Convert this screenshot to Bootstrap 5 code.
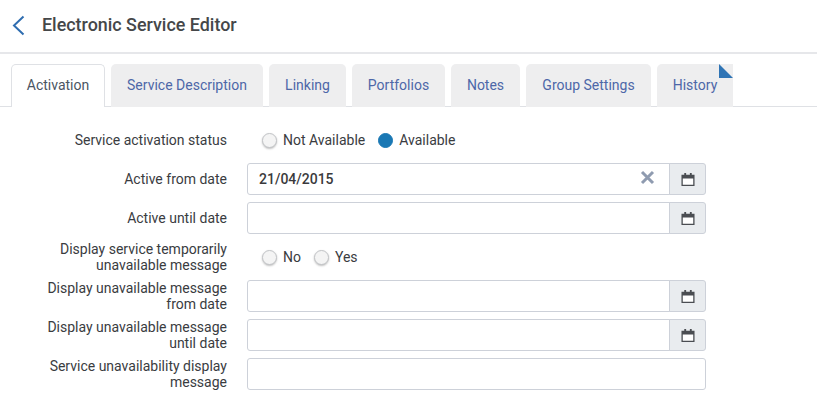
<!DOCTYPE html>
<html lang="en">
<head>
<meta charset="utf-8">
<title>Electronic Service Editor</title>
<link rel="stylesheet" href="https://cdn.jsdelivr.net/npm/bootstrap@5.3.0/dist/css/bootstrap.min.css">
<style>
html, body { height: 413px; overflow: hidden; }
body { font-family: Roboto, "Liberation Sans", sans-serif; font-size: 14px; color: #3a3a3c; background: #fff; }
.page-head { height: 54px; border-bottom: 2px solid #e6e7ea; padding-left: 12px; padding-bottom: 2px; }
.back-btn { width: 30px; line-height: 0; }
.page-title { font-size: 17.9px; font-weight: 500; color: #454749; margin: 0; }
.tab-bar { margin-top: 10px; height: 43px; padding-left: 11px; gap: 6px; border-bottom: 1px solid #dfe1e5; flex-wrap: nowrap; }
.tab-bar .nav-link { height: 43px; padding: 0; display: flex; align-items: center; justify-content: center; font-size: 14px; color: #4d67a8; background: #eeeeef; border: 0; border-radius: 5px 5px 0 0; }
.tab-bar .nav-link.active { color: #4b5563; background: #fff; border: 1px solid #dfe1e5; border-bottom: 0; padding-bottom: 1px; }
.tab-history { position: relative; border-top-right-radius: 0 !important; }
.corner-flag { position: absolute; top: 0; right: 0; width: 14px; height: 14px; background: #2f74b5; clip-path: polygon(0 0, 100% 100%, 0 100%); }
.form-area { padding-top: 17px; }
.form-line { height: 32px; margin-bottom: 7px; display: flex; align-items: center; }
.field-label { width: 227px; flex: none; padding-left: 30px; text-align: right; line-height: 16px; color: #3a3c3f; margin: 0; }
.field-box { width: 459px; margin-left: 20px; flex: none; }
.field-box .form-control { height: 32px; padding: 0 11px 1px; font-size: 14px; font-weight: 500; color: #3a3a3c; border: 1px solid #cdd1d9; border-radius: 3px; box-shadow: none; }
.cal-btn { width: 37px; padding: 0; display: flex; align-items: center; justify-content: center; background: #e9ecef; border: 1px solid #cdd1d9; border-radius: 0 3px 3px 0; }
.clear-mark { position: absolute; top: 7px; right: 51px; z-index: 5; line-height: 0; }
.radio-set { margin-left: 35px; display: flex; align-items: center; }
.radio-opt { display: flex; align-items: center; margin: 0 13px 0 0; gap: 6px; color: #3a3c3f; }
.radio-dot { width: 15px; height: 15px; margin: 0; flex: none; appearance: none; -webkit-appearance: none; border-radius: 50%; background: #f4f4f4; border: 1px solid #c2c4c7; box-shadow: 0 1px 2px rgba(0,0,0,.25); }
.radio-dot:checked { background: #1a78b4; border-color: #1a78b4; box-shadow: none; }
</style>
</head>
<body>
<header class="page-head d-flex align-items-center">
  <a class="back-btn" href="#" aria-label="Back">
    <svg width="13" height="21" viewBox="0 0 13 21"><path d="M11.5 1.5 2 10.5 11.5 19.5" fill="none" stroke="#2f6db0" stroke-width="2"/></svg>
  </a>
  <h1 class="page-title">Electronic Service Editor</h1>
</header>

<ul class="nav tab-bar">
  <li class="nav-item" style="width:94px"><a class="nav-link active" href="#">Activation</a></li>
  <li class="nav-item" style="width:152px"><a class="nav-link" href="#">Service Description</a></li>
  <li class="nav-item" style="width:77px"><a class="nav-link" href="#">Linking</a></li>
  <li class="nav-item" style="width:93px"><a class="nav-link" href="#">Portfolios</a></li>
  <li class="nav-item" style="width:69px"><a class="nav-link" href="#">Notes</a></li>
  <li class="nav-item" style="width:125px"><a class="nav-link" href="#">Group Settings</a></li>
  <li class="nav-item" style="width:76px"><a class="nav-link tab-history" href="#">History<span class="corner-flag"></span></a></li>
</ul>

<form class="form-area">
  <div class="form-line">
    <label class="field-label">Service activation status</label>
    <div class="radio-set">
      <label class="radio-opt"><input class="radio-dot" type="radio" name="act">Not Available</label>
      <label class="radio-opt"><input class="radio-dot" type="radio" name="act" checked>Available</label>
    </div>
  </div>
  <div class="form-line">
    <label class="field-label">Active from date</label>
    <div class="input-group field-box position-relative">
      <input class="form-control" type="text" value="21/04/2015">
      <span class="clear-mark"><svg width="15" height="15" viewBox="0 0 15 15"><path d="M2 2 13 13M13 2 2 13" stroke="#8f9bb0" stroke-width="3"/></svg></span>
      <button class="cal-btn" type="button" aria-label="Calendar"><svg width="14" height="15" viewBox="0 0 15 15"><use href="#cal"/></svg></button>
    </div>
  </div>
  <div class="form-line">
    <label class="field-label">Active until date</label>
    <div class="input-group field-box">
      <input class="form-control" type="text">
      <button class="cal-btn" type="button" aria-label="Calendar"><svg width="14" height="15" viewBox="0 0 15 15"><use href="#cal"/></svg></button>
    </div>
  </div>
  <div class="form-line">
    <label class="field-label">Display service temporarily unavailable message</label>
    <div class="radio-set">
      <label class="radio-opt"><input class="radio-dot" type="radio" name="msg">No</label>
      <label class="radio-opt"><input class="radio-dot" type="radio" name="msg">Yes</label>
    </div>
  </div>
  <div class="form-line">
    <label class="field-label">Display unavailable message from date</label>
    <div class="input-group field-box">
      <input class="form-control" type="text">
      <button class="cal-btn" type="button" aria-label="Calendar"><svg width="14" height="15" viewBox="0 0 15 15"><use href="#cal"/></svg></button>
    </div>
  </div>
  <div class="form-line">
    <label class="field-label">Display unavailable message until date</label>
    <div class="input-group field-box">
      <input class="form-control" type="text">
      <button class="cal-btn" type="button" aria-label="Calendar"><svg width="14" height="15" viewBox="0 0 15 15"><use href="#cal"/></svg></button>
    </div>
  </div>
  <div class="form-line">
    <label class="field-label">Service unavailability display message</label>
    <div class="input-group field-box">
      <input class="form-control" type="text">
    </div>
  </div>
</form>

<svg width="0" height="0" class="d-block" aria-hidden="true">
  <symbol id="cal" viewBox="0 0 15 15">
    <path d="M1 3h13v11H1z" fill="#fff"/>
    <path d="M.5 2.5h14V14.5H.5zM1.9 6.5V13.1H13.1V6.5z" fill="#4a4d52" fill-rule="evenodd"/>
    <path d="M3.5 .5h2v3h-2zM9.5 .5h2v3h-2z" fill="#4a4d52"/>
  </symbol>
</svg>
<script src="https://cdn.jsdelivr.net/npm/bootstrap@5.3.0/dist/js/bootstrap.bundle.min.js"></script>
</body>
</html>
